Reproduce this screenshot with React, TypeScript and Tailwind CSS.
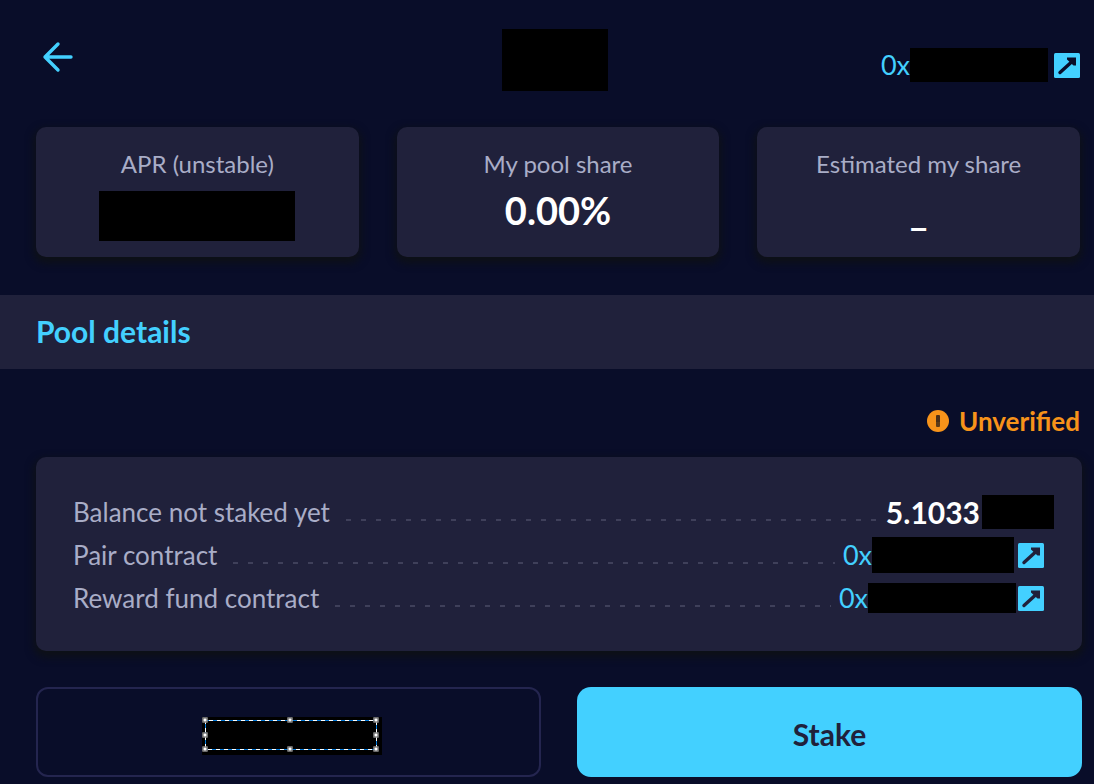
import type { ReactNode } from 'react';

const panelStyle = 'rounded-[10px] bg-[#20213b] shadow-[0_4px_8px_2px_#0e1116]';

// solid block drawn over hidden values
function Redacted({ className }: { className: string }) {
  return <span aria-hidden="true" className={`block shrink-0 bg-black ${className}`} />;
}

function ExternalIcon({ cut }: { cut: string }) {
  return (
    <svg width="26" height="26" viewBox="0 0 26 26" fill="none" aria-hidden="true">
      <rect y="1" width="26" height="25" rx="1.5" fill="#43d0ff" />
      <path d="M6 20.5L17 10.5" stroke={cut} strokeWidth="3.4" strokeLinecap="round" />
      <path d="M13 5.5H22V13.5H19.5L13 7.5Z" fill={cut} />
    </svg>
  );
}

function WarningIcon() {
  return (
    <svg width="22" height="24" viewBox="0 0 22 24" aria-hidden="true">
      <circle cx="11" cy="12" r="11" fill="#f7931a" />
      <rect x="9" y="6" width="4" height="8" rx="1" fill="#4a2f18" />
      <rect x="9" y="13" width="4" height="5" rx="1" fill="#5e3b18" />
    </svg>
  );
}

function StatCard({ label, children }: { label: string; children: ReactNode }) {
  return (
    <div className={`flex h-[130px] flex-col items-center pt-[19px] ${panelStyle}`}>
      <p className="text-2xl leading-9 text-[#a9adc7]">{label}</p>
      {children}
    </div>
  );
}

function AddressLink({ label, width, cut }: { label: string; width: string; cut: string }) {
  return (
    <a href="#" aria-label={label} className="flex items-center text-[27px] leading-9 text-[#43d0ff]">
      0x
      <Redacted className={width} />
      <ExternalIcon cut={cut} />
    </a>
  );
}

function DetailRow({ label, children }: { label: string; children: ReactNode }) {
  return (
    <div className="flex h-[43px] items-center">
      <dt className="text-[26px] leading-9 text-[#a9adc7]">{label}</dt>
      <span className="mt-4 mr-2 ml-4 h-0.5 flex-1 bg-[repeating-linear-gradient(90deg,#3f405a_0_5px,transparent_5px_15px)]" />
      <dd>{children}</dd>
    </div>
  );
}

const handles = [
  'left-0 top-0',
  'left-1/2 top-0',
  'left-full top-0',
  'left-0 top-1/2',
  'left-full top-1/2',
  'left-0 top-full',
  'left-1/2 top-full',
  'left-full top-full',
];

function SelectionBox() {
  return (
    <span aria-hidden="true" className="absolute top-[3px] right-[6px] bottom-[6px] left-[3px]">
      <svg width="100%" height="100%" className="block overflow-visible" shapeRendering="crispEdges">
        <rect width="100%" height="100%" fill="none" stroke="#fff" />
        <rect width="100%" height="100%" fill="none" stroke="#0078d7" strokeDasharray="4 4" />
      </svg>
      {handles.map((place) => (
        <span
          key={place}
          className={`absolute size-[5px] -translate-1/2 border border-[#555] bg-white ${place}`}
        />
      ))}
    </span>
  );
}

export default function App() {
  return (
    <main className="min-h-screen bg-[#090d29] pb-[7px] font-['Lato',sans-serif]">
      <header className="flex h-[127px] items-start pr-[14px] pl-[30px]">
        <div className="flex-1 pt-9">
          <button type="button" aria-label="Back" className="block px-3 py-1 text-[#43d0ff]">
            <svg width="32" height="34" viewBox="0 0 32 34" fill="none" aria-hidden="true">
              <path
                d="M29 17H3M16 4L3 17L16 30"
                stroke="currentColor"
                strokeWidth="3.4"
                strokeLinecap="round"
                strokeLinejoin="round"
              />
            </svg>
          </button>
        </div>
        <Redacted className="mt-[29px] h-[62px] w-[106px]" />
        <div className="flex flex-1 justify-end pt-[47px]">
          <AddressLink label="Pool address" width="mr-1.5 h-[34px] w-[138px]" cut="#090d29" />
        </div>
      </header>

      <section className="grid grid-cols-3 gap-[38px] pr-[14px] pl-9">
        <StatCard label="APR (unstable)">
          <Redacted className="mt-[9px] h-[50px] w-[196px]" />
        </StatCard>
        <StatCard label="My pool share">
          <p className="mt-1 text-[38px] leading-[48px] font-bold text-white">0.00%</p>
        </StatCard>
        <StatCard label="Estimated my share">
          <p className="mt-1 text-[38px] leading-[48px] font-bold text-white">_</p>
        </StatCard>
      </section>

      <h2 className="mt-[38px] bg-[#20213b] pt-[18px] pb-5 pl-9 text-[30px] leading-9 font-bold text-[#43d0ff]">
        Pool details
      </h2>

      <section className="pr-3 pl-9">
        <div className="flex items-center justify-end gap-2.5 pt-[34px] pr-0.5 pb-[18px] text-[26px] leading-9 font-bold text-[#f7931a]">
          <WarningIcon />
          Unverified
        </div>

        <dl className={`pt-[33px] pr-7 pb-8 pl-[37px] ${panelStyle}`}>
          <DetailRow label="Balance not staked yet">
            <span className="flex items-center gap-0.5 text-[30px] leading-9 font-bold text-white">
              5.1033
              <Redacted className="h-[34px] w-[72px]" />
            </span>
          </DetailRow>
          <DetailRow label="Pair contract">
            <span className="block pr-[10px]">
              <AddressLink label="Pair contract address" width="mr-1 h-9 w-[142px]" cut="#20213b" />
            </span>
          </DetailRow>
          <DetailRow label="Reward fund contract">
            <span className="block pr-[10px]">
              <AddressLink
                label="Reward fund contract address"
                width="mr-0.5 h-[30px] w-[148px]"
                cut="#20213b"
              />
            </span>
          </DetailRow>
        </dl>

        <div className="mt-9 grid grid-cols-2 gap-9">
          <button
            type="button"
            aria-label="Unstake"
            className="flex h-[90px] items-center justify-center rounded-[12px] border-2 border-[#24254f] pl-1.5"
          >
            <span className="relative mt-2 block h-[38px] w-[180px] bg-black">
              <SelectionBox />
            </span>
          </button>
          <button
            type="button"
            className="h-[90px] rounded-[14px] bg-[#43d0ff] pt-1 text-[30px] leading-9 font-bold text-[#20213b]"
          >
            Stake
          </button>
        </div>
      </section>
    </main>
  );
}
